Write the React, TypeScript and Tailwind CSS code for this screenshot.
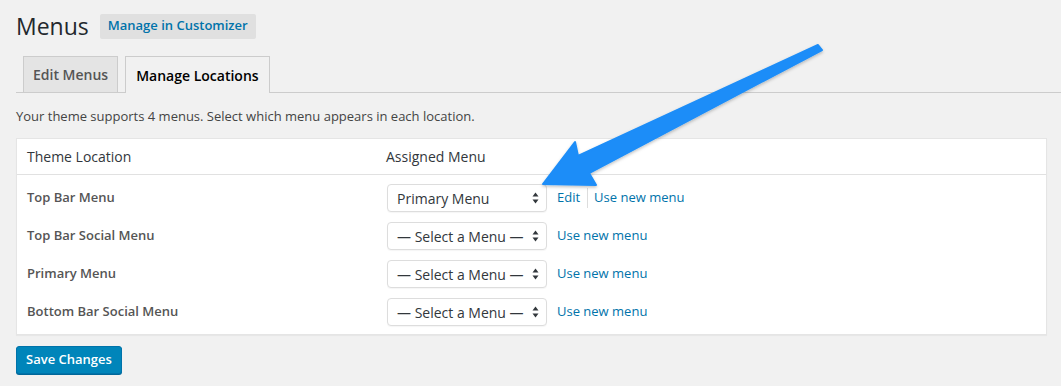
import React from "react";

const rows = [
  { label: "Top Bar Menu", value: "Primary Menu", edit: true },
  { label: "Top Bar Social Menu", value: "— Select a Menu —", edit: false },
  { label: "Primary Menu", value: "— Select a Menu —", edit: false },
  { label: "Bottom Bar Social Menu", value: "— Select a Menu —", edit: false },
];

const SelectBox: React.FC<{ value: string }> = ({ value }) => (
  <div className="ml-px w-[160px] h-[28px] bg-white border border-[#ddd] rounded-[4px] flex items-center justify-between pl-[9px] pr-[7px] text-[14px] text-[#32373c] shadow-[0_1px_1px_rgba(0,0,0,0.04)]">
    <span>{value}</span>
    <svg width="7" height="12" viewBox="0 0 7 12" className="text-[#32373c]">
      <path d="M3.5 0.5 L6.5 4.5 L0.5 4.5 Z" fill="currentColor" />
      <path d="M3.5 11.5 L6.5 7.5 L0.5 7.5 Z" fill="currentColor" />
    </svg>
  </div>
);

export default function App() {
  return (
    <div
      className="relative w-[1061px] h-[386px] overflow-hidden bg-[#f1f1f1] text-[#444]"
      style={{ fontFamily: '"Open Sans", "Noto Sans", sans-serif' }}
    >
      <div className="pl-4 pt-[12px]">
        {/* Header */}
        <div className="flex items-center gap-[11px] h-[28px]">
          <h1 className="text-[23px] leading-[28px] text-[#23282d] font-normal">Menus</h1>
          <span className="h-[25px] px-[8px] flex items-center bg-[#e0e0e0] rounded-[2px] text-[13px] font-semibold text-[#0073aa]">
            Manage in Customizer
          </span>
        </div>

        {/* Tabs */}
        <div className="mt-[17px] flex items-end gap-[7px] pl-[7px] border-b border-[#ccc] h-[36px]">
          <div className="h-[36px] px-[9px] flex items-center bg-[#e4e4e4] border border-[#ccc] border-b-0 text-[14px] font-semibold text-[#555]">
            Edit Menus
          </div>
          <div className="h-[37px] -mb-px px-[10px] flex items-center bg-[#f1f1f1] border border-[#ccc] border-b-0 text-[14px] font-semibold text-black">
            Manage Locations
          </div>
        </div>

        <p className="mt-[14px] text-[13px] leading-[18px] text-[#444]">
          Your theme supports 4 menus. Select which menu appears in each location.
        </p>

        {/* Table */}
        <div className="mt-[13px] w-[1031px] bg-white border border-[#e5e5e5] shadow-[0_1px_1px_rgba(0,0,0,0.04)]">
          <div className="h-[36px] flex items-center px-[10px] border-b border-[#e1e1e1] text-[14px] text-[#32373c]">
            <div className="w-[359px]">Theme Location</div>
            <div>Assigned Menu</div>
          </div>
          <div className="pt-[4px] pb-[3px]">
            {rows.map((r) => (
              <div key={r.label} className="h-[38px] flex items-center px-[10px]">
                <div className="w-[359px] text-[13px] font-semibold text-[#555]">{r.label}</div>
                <SelectBox value={r.value} />
                <div className="ml-[10px] flex items-center text-[13px] text-[#0073aa]">
                  {r.edit && (
                    <>
                      <span>Edit</span>
                      <span className="ml-[7px] mr-[6px] w-px h-[20px] bg-[#ddd]" />
                    </>
                  )}
                  <span>Use new menu</span>
                </div>
              </div>
            ))}
          </div>
        </div>

        <button className="mt-[11px] h-[28px] px-[9px] bg-[#0085ba] border border-[#0073aa] rounded-[3px] text-white text-[13px] font-semibold shadow-[0_1px_0_#006799]">
          Save Changes
        </button>
      </div>

      {/* Annotation arrow */}
      <svg className="absolute inset-0 pointer-events-none" width="1061" height="386" viewBox="0 0 1061 386">
        <defs>
          <filter id="sh" x="-10%" y="-10%" width="120%" height="130%">
            <feDropShadow dx="0" dy="1.5" stdDeviation="1.5" floodColor="#000" floodOpacity="0.25" />
          </filter>
        </defs>
        <polygon
          points="543,184 575,142 578,156 818,45 822,50 589,173 596,185"
          fill="#1b8df8"
          stroke="#1b8df8"
          strokeWidth="2"
          strokeLinejoin="round"
          filter="url(#sh)"
        />
      </svg>
    </div>
  );
}
